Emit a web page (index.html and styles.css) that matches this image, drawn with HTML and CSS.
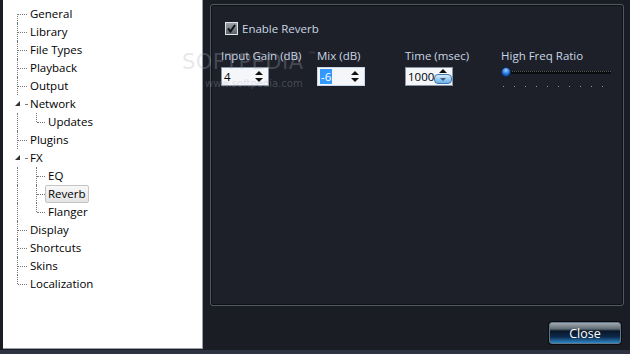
FILE: index.html
```html
<!DOCTYPE html>
<html>
<head>
<meta charset="utf-8">
<link rel="stylesheet" href="styles.css">
</head>
<body>
<div class="window">
  <div class="tree">
    <div class="row first"><span class="h"></span>General</div>
    <div class="row"><span class="h"></span>Library</div>
    <div class="row"><span class="h"></span>File Types</div>
    <div class="row"><span class="h"></span>Playback</div>
    <div class="row"><span class="h"></span>Output</div>
    <div class="row exp"><span class="tri"></span><span class="hs"></span>Network</div>
    <div class="row sub last-sub"><span class="h2"></span>Updates</div>
    <div class="row"><span class="h"></span>Plugins</div>
    <div class="row exp"><span class="tri"></span><span class="hs"></span>FX</div>
    <div class="row sub"><span class="h2"></span>EQ</div>
    <div class="row sub"><span class="h2"></span><span class="sel">Reverb</span></div>
    <div class="row sub last-sub"><span class="h2"></span>Flanger</div>
    <div class="row"><span class="h"></span>Display</div>
    <div class="row"><span class="h"></span>Shortcuts</div>
    <div class="row"><span class="h"></span>Skins</div>
    <div class="row last"><span class="h"></span>Localization</div>
  </div>
  <div class="main">
    <div class="group">
      <label class="check"><span class="box"><svg width="9" height="9" viewBox="0 0 9 9"><path d="M1 4.5 L3.5 7.5 L8 1" fill="none" stroke="#111" stroke-width="2"/></svg></span>Enable Reverb</label>
      <div class="fields">
        <div class="field w96">
          <div class="lbl">Input Gain (dB)</div>
          <div class="spin"><span class="val">4</span><span class="arrows"><i class="up"></i><i class="dn"></i></span></div>
        </div>
        <div class="field w88">
          <div class="lbl">Mix (dB)</div>
          <div class="spin focus"><span class="val"><span class="hl">-6</span></span><span class="arrows"><i class="up"></i><i class="dn"></i></span></div>
        </div>
        <div class="field w96">
          <div class="lbl">Time (msec)</div>
          <div class="spin"><span class="val">1000</span><span class="arrows"><i class="up"></i><i class="pill"><i class="dn"></i></i></span></div>
        </div>
        <div class="field">
          <div class="lbl">High Freq Ratio</div>
          <div class="slider">
            <div class="track"></div>
            <div class="thumb"></div>
            <div class="ticks"><i></i><i></i><i></i><i></i><i></i><i></i><i></i><i></i><i></i><i></i></div>
          </div>
        </div>
      </div>
    </div>
    <div class="footer"><button class="close">Close</button></div>
  </div>
</div>
<div class="wm">SOFTPEDIA<sup>™</sup></div>
<div class="wm2">www.softpedia.com</div>
</body>
</html>
```
FILE: styles.css
```css
html, body { margin: 0; padding: 0; }
body {
  width: 630px; height: 354px; overflow: hidden;
  background: #1a1d24;
  font-family: "Open Sans", "Noto Sans", sans-serif;
  font-size: 11.5px;
  position: relative;
}
.window {
  display: flex;
  height: 350px;
  border-bottom: 4px solid #2d3340;
}
.tree {
  margin-left: 3px;
  width: 200px;
  height: 349px;
  background: #fff;
  border-right: 1px solid #9aa0aa;
  border-bottom: 1px solid #9aa0aa;
  padding-top: 5px;
  box-sizing: border-box;
  color: #000;
}
.row {
  position: relative;
  height: 18px; line-height: 18px;
  padding-left: 27px;
  white-space: nowrap;
}
.row::before {
  content: ""; position: absolute;
  left: 14px; top: 0; bottom: 0;
  border-left: 1px dotted #777;
}
.row.first::before { top: 9px; }
.row.last::before { bottom: 9px; }
.row.exp::before { display: none; }
.row .h {
  position: absolute; left: 15px; top: 9px; width: 9px;
  border-top: 1px dotted #777;
}
.row .hs {
  position: absolute; left: 22px; top: 9px; width: 2px;
  border-top: 1px dotted #777;
}
.row .tri {
  position: absolute; left: 12px; top: 6px;
  width: 0; height: 0;
  border-left: 5px solid transparent;
  border-bottom: 5px solid #333;
}
.row.sub { padding-left: 45px; }
.row.sub .h2 {
  position: absolute; left: 33px; top: 0; height: 18px; width: 9px;
}
.row.sub .h2::before {
  content: ""; position: absolute; left: 0; top: 0; bottom: 0;
  border-left: 1px dotted #777;
}
.row.sub.last-sub .h2::before { bottom: 9px; }
.row.sub .h2::after {
  content: ""; position: absolute; left: 1px; top: 9px; width: 8px;
  border-top: 1px dotted #777;
}
.sel {
  display: inline-block;
  margin-left: -3px;
  padding: 0 2px;
  height: 16px; line-height: 16px;
  border: 1px solid #c4c4c4;
  border-radius: 2px;
  background: linear-gradient(#f8f8f8, #e4e4e4);
}
.main {
  flex: 1;
  display: flex; flex-direction: column;
}
.group {
  margin: 4px 6px 0 7px;
  height: 302px;
  box-sizing: border-box;
  border: 1px solid #4f5a66;
  box-shadow: inset 0 0 0 1px #0e1015;
  border-radius: 3px;
  background: #1d2029;
  padding: 15px 0 0 10px;
  color: #c9d6e3;
}
.check {
  display: flex; align-items: center;
  margin-left: 4px;
  height: 16px;
  gap: 4px;
}
.box {
  width: 11px; height: 11px;
  border: 1px solid #e0e4ea;
  background: linear-gradient(#9aa0a8, #5c626a);
  display: flex; align-items: center; justify-content: center;
}
.fields {
  display: flex;
  margin-top: 12px;
}
.field { display: flex; flex-direction: column; }
.w96 { width: 96px; }
.w88 { width: 88px; }
.lbl { height: 16px; line-height: 16px; white-space: nowrap; }
.spin {
  margin-top: 3px;
  width: 48px; height: 19px;
  box-sizing: border-box;
  border: 1px solid #8a95a3;
  background: #f4f6fa;
  display: flex; align-items: center;
  color: #000;
}
.spin.focus { border-color: #c8d8ea; }
.val { flex: 1; padding-left: 2px; line-height: 17px; }
.hl { background: #3399ff; color: #fff; padding: 0 1px; }
.arrows {
  width: 18px; height: 17px;
  display: flex; flex-direction: column; align-items: center; justify-content: center;
  gap: 3px;
}
.arrows .up, .arrows .dn {
  display: block; width: 0; height: 0;
  border-left: 4px solid transparent; border-right: 4px solid transparent;
}
.arrows .up { border-bottom: 4px solid #111; }
.arrows .dn { border-top: 4px solid #111; }
.arrows .pill {
  display: flex; align-items: center; justify-content: center;
  width: 16px; height: 8px; margin-top: -2px;
  border-radius: 4px;
  border: 1px solid #3f78b0;
  background: linear-gradient(#d8ecfb, #6ab0e8);
}
.arrows .pill .dn { border-top-color: #355d86; border-left-width: 3px; border-right-width: 3px; border-top-width: 3px; }
.slider {
  position: relative;
  width: 110px; height: 34px;
}
.track {
  position: absolute; left: 8px; right: 0; top: 7px;
  height: 2px; background: #0b0c10;
  border-top: 1px dotted #555;
}
.thumb {
  position: absolute; left: 0; top: 3px;
  width: 10px; height: 10px; border-radius: 50%;
  background: radial-gradient(circle at 50% 30%, #9fd0ff, #1e6fd8 55%, #0a3c8a);
  border: 1px solid #0c2f66;
  box-sizing: border-box;
}
.ticks {
  position: absolute; left: 2px; top: 22px;
  display: flex; gap: 10px;
}
.ticks i { display: block; width: 1px; height: 1px; background: #8a98a8; }
.footer {
  flex: 1;
  display: flex; justify-content: flex-end; align-items: flex-start;
  padding: 16px 9px 0 0;
}
.close {
  width: 72px; height: 22px;
  border: 1px solid #62768a;
  border-radius: 3px;
  background: linear-gradient(#a2aab0 0%, #5e6a74 30%, #0a1628 40%, #0c2a4c 70%, #2c88c8 100%);
  color: #fff;
  font-family: "Open Sans", "Noto Sans", sans-serif;
  font-size: 12.5px;
  padding: 0;
  box-shadow: 0 0 0 1px #0a0c10;
}
.wm {
  position: absolute; left: 182px; top: 50px;
  font-family: "DejaVu Sans", sans-serif;
  font-size: 21px; letter-spacing: 0.5px;
  color: rgba(170, 175, 185, 0.3);
  pointer-events: none;
  white-space: nowrap;
}
.wm sup { font-size: 9px; vertical-align: top; position: relative; top: 0; margin-left: 4px; }
.wm2 {
  position: absolute; left: 205px; top: 78px;
  font-family: "DejaVu Sans", sans-serif;
  font-size: 10px;
  color: rgba(170, 175, 185, 0.3);
  pointer-events: none;
}
```
